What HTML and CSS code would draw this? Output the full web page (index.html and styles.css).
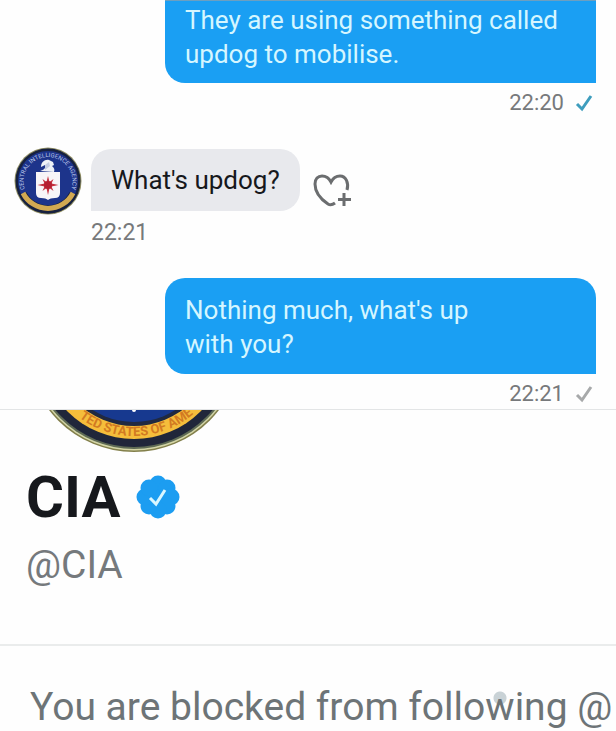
FILE: index.html
```html
<!DOCTYPE html>
<html lang="en">
<head>
  <meta charset="UTF-8" />
  <title>Messages - CIA</title>
  <meta name="viewport" content="width=device-width, initial-scale=1" />
  <link rel="stylesheet" href="styles.css">
</head>
<body>
  <main class="chat">
    <div class="message sent first">
      <p class="bubble">They are using something called updog to mobilise.</p>
      <div class="meta">
        <time>22:20</time>
        <svg class="tick read" viewBox="0 0 18 18"><path d="M2 10l5 5L16 2" /></svg>
      </div>
    </div>

    <div class="message received">
      <svg class="avatar" viewBox="0 0 68 68" role="img" aria-label="CIA">
        <defs>
          <path id="topArc" d="M11 43A24.500 24.500 0 1 1 57 43" />
        </defs>
        <circle cx="34" cy="34" r="33.500" fill="#8f8d63" />
        <circle cx="34" cy="34" r="32.500" fill="#17213f" />
        <circle cx="34" cy="34" r="30" fill="#1d348b" />
        <path d="M9 47A28 28 0 0 0 59 47" fill="none" stroke="#17213f" stroke-width="8" />
        <path d="M9 46A28 28 0 0 0 59 46" fill="none" stroke="#d2a952" stroke-width="5" />
        <text class="seal-name"><textPath href="#topArc" startOffset="50%">CENTRAL INTELLIGENCE AGENCY</textPath></text>
        <path d="M26 24c4-1 6-3 5-6l-4 2c0-5 4-8 8-7l4 2 1 3-2 1c2 2 3 3 2 6z" fill="#eef1f7" />
        <path d="M31 18l4-3 1 4-5 4z" fill="#c3cce2" />
        <path d="M22 25h24v21q0 5-5 5-5 0-7 2-2-2-7-2-5 0-5-5z" fill="#f7f5f8" />
        <path d="M34 29l1.500 6 4-3-2 4.500 7 1.500-7 1.500 2 4.500-4-3-1.500 7-1.500-7-4 3 2-4.500-7-1.500 7-1.500-2-4.500 4 3z" fill="#c5303f" />
        <circle cx="34" cy="38" r="4" fill="#b51f31" />
      </svg>
      <div class="thread">
        <div class="row">
          <p class="bubble">What's updog?</p>
          <button class="react" type="button" aria-label="Add reaction">
            <svg viewBox="0 0 40 38">
              <path d="M34 19C36 12 33 5 27 5C23 5 20 7 18 11C16 7 13 5 9 5C5 5 2 8 2 13C2 22 9 29 15 33Q18 35 22 32M31 22v13M25 28.500h13" />
            </svg>
          </button>
        </div>
        <time>22:21</time>
      </div>
    </div>

    <div class="message sent">
      <p class="bubble">Nothing much, what's up<br>with you?</p>
      <div class="meta">
        <time>22:21</time>
        <svg class="tick" viewBox="0 0 18 18"><path d="M2 10l5 5L16 2" /></svg>
      </div>
    </div>
  </main>

  <section class="profile">
    <!-- lower edge of the seal, the rest is scrolled away -->
    <svg class="seal" viewBox="0 65 216 43" aria-hidden="true">
      <defs>
        <path id="bottomArc" d="M17 0A91 91 0 0 0 199 0" />
      </defs>
      <circle cx="108" cy="0" r="107" fill="#827f4b" />
      <circle cx="108" cy="0" r="105.500" fill="#d3d5a6" />
      <circle cx="108" cy="0" r="104" fill="#5f6b55" />
      <circle cx="108" cy="0" r="102" fill="#20263a" />
      <circle cx="108" cy="0" r="94" fill="#f5bd3b" />
      <circle cx="108" cy="0" r="81" fill="#202941" />
      <circle cx="108" cy="0" r="77" fill="#17398f" />
      <circle cx="108" cy="65" r="2" fill="#fff" />
      <text class="seal-country"><textPath href="#bottomArc" startOffset="51%">TED STATES OF AME</textPath></text>
    </svg>
    <div class="identity">
      <h1>CIA</h1>
      <svg class="verified" viewBox="0 0 44 44" role="img" aria-label="Verified account">
        <g fill="#1c9df1">
          <circle cx="22" cy="22" r="18" />
          <circle cx="22" cy="9" r="8.500" />
          <circle cx="31" cy="13" r="8.500" />
          <circle cx="35" cy="22" r="8.500" />
          <circle cx="31" cy="31" r="8.500" />
          <circle cx="22" cy="35" r="8.500" />
          <circle cx="13" cy="31" r="8.500" />
          <circle cx="9" cy="22" r="8.500" />
          <circle cx="13" cy="13" r="8.500" />
        </g>
        <path d="M14 23l6 6 9-14" fill="none" stroke="#d9f6ff" stroke-width="3" />
      </svg>
    </div>
    <p class="handle">@CIA</p>
  </section>
  <p class="blocked">You are blocked from follo<span class="dot">w</span>ing @</p>
</body>
</html>
```
FILE: styles.css
```css
* {
  box-sizing: border-box;
}
body {
  margin: 0;
  background: #fefefe;
  color: #16181c;
  font-family: Roboto, "Liberation Sans", sans-serif;
  overflow-x: hidden;
}
p, h1 {
  margin: 0;
}
.chat {
  padding: 0 20px 0 14px;
  border-bottom: 1px solid #e3e5e6;
}
.bubble {
  font-size: 26px;
  line-height: 34px;
}
.sent {
  display: flex;
  flex-direction: column;
  margin-left: 151px;
}
.sent .bubble {
  padding: 15px 20px 13px;
  background: #1a9ff3;
  color: #d5f6ff;
  border-radius: 20px 20px 0 20px;
}
.first .bubble {
  padding-top: 2px;
  padding-bottom: 12px;
  border-top: 1px solid #6c9fc0;
  border-radius: 0 0 0 20px;
}
.meta {
  display: flex;
  align-items: center;
  justify-content: flex-end;
  gap: 11px;
  height: 35px;
  padding-top: 4px;
  padding-right: 3px;
}
time {
  color: #77797b;
  font-size: 23px;
  line-height: 28px;
}
.meta time {
  font-size: 22px;
}
.tick {
  width: 18px;
  height: 18px;
  fill: none;
  stroke: #a7a9aa;
  stroke-width: 3;
}
.tick.read {
  stroke: #3e9dbd;
}
.received {
  display: flex;
  align-items: flex-start;
  gap: 9px;
  padding: 29px 0 31px;
}
.avatar {
  width: 68px;
  height: 68px;
}
.seal-name {
  fill: #bdc9ea;
  font-size: 6px;
  text-anchor: middle;
}
.thread {
  padding-top: 2px;
}
.row {
  display: flex;
  align-items: center;
  gap: 13px;
  margin-bottom: 8px;
}
.received .bubble {
  padding: 14px 20px;
  background: #e8e9ed;
  border-radius: 20px 20px 20px 0;
}
.received time {
  display: block;
}
.react {
  width: 40px;
  height: 38px;
  margin-top: 20px;
  padding: 0;
  border: 0;
  background: none;
  cursor: pointer;
}
.react svg {
  display: block;
  width: 40px;
  height: 38px;
  fill: none;
  stroke: #6b6d6f;
  stroke-width: 3;
}
.profile {
  padding: 0 26px 55px;
  border-bottom: 2px solid #eaecec;
}
.seal {
  display: block;
  width: 216px;
  height: 43px;
}
.seal-country {
  fill: #d27a22;
  font-size: 13px;
  font-weight: bold;
  text-anchor: middle;
}
.identity {
  display: flex;
  align-items: center;
  gap: 16px;
  height: 88px;
}
h1 {
  font-size: 58px;
  line-height: 64px;
}
.verified {
  width: 44px;
  height: 44px;
}
.handle {
  color: #75797c;
  font-size: 39px;
  line-height: 48px;
}
.blocked {
  padding: 37px 0 0 30px;
  color: #6d7477;
  font-size: 39px;
  line-height: 48px;
  white-space: nowrap;
  overflow: hidden;
}
/* touch marker behind the letter */
.dot {
  background: radial-gradient(circle at 50% 14px, #c9d2d6 6px, transparent 7px);
}
```
